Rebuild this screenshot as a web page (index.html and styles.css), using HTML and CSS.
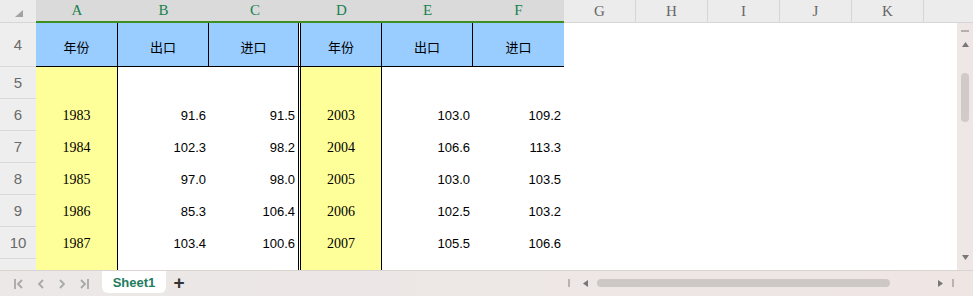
FILE: index.html
```html
<!DOCTYPE html>
<html lang="zh-CN">
<head>
  <meta charset="UTF-8">
  <title>Sheet1</title>
  <link rel="stylesheet" href="styles.css">
</head>
<body>
  <div class="app">
    <div class="colhead">
      <div class="corner">
        <svg width="8" height="7" viewBox="0 0 8 7"><polygon points="8,0 8,7 0,7" fill="#a3a3a3"/></svg>
      </div>
      <div class="ch sel a">A</div>
      <div class="ch sel b">B</div>
      <div class="ch sel c">C</div>
      <div class="ch sel d">D</div>
      <div class="ch sel e">E</div>
      <div class="ch sel f">F</div>
      <div class="ch g">G</div>
      <div class="ch g">H</div>
      <div class="ch g">I</div>
      <div class="ch g">J</div>
      <div class="ch g">K</div>
      <div class="ch rest"></div>
    </div>

    <div class="body">
      <div class="rows">
        <div class="row head">
          <div class="rh">4</div>
          <div class="cell a">年份</div>
          <div class="cell b">出口</div>
          <div class="cell c">进口</div>
          <div class="cell d">年份</div>
          <div class="cell e">出口</div>
          <div class="cell f">进口</div>
        </div>
        <div class="row">
          <div class="rh">5</div>
          <div class="cell a"></div>
          <div class="cell b"></div>
          <div class="cell c"></div>
          <div class="cell d"></div>
          <div class="cell e"></div>
          <div class="cell f"></div>
        </div>
        <div class="row">
          <div class="rh">6</div>
          <div class="cell a">1983</div>
          <div class="cell b">91.6</div>
          <div class="cell c">91.5</div>
          <div class="cell d">2003</div>
          <div class="cell e">103.0</div>
          <div class="cell f">109.2</div>
        </div>
        <div class="row">
          <div class="rh">7</div>
          <div class="cell a">1984</div>
          <div class="cell b">102.3</div>
          <div class="cell c">98.2</div>
          <div class="cell d">2004</div>
          <div class="cell e">106.6</div>
          <div class="cell f">113.3</div>
        </div>
        <div class="row">
          <div class="rh">8</div>
          <div class="cell a">1985</div>
          <div class="cell b">97.0</div>
          <div class="cell c">98.0</div>
          <div class="cell d">2005</div>
          <div class="cell e">103.0</div>
          <div class="cell f">103.5</div>
        </div>
        <div class="row">
          <div class="rh">9</div>
          <div class="cell a">1986</div>
          <div class="cell b">85.3</div>
          <div class="cell c">106.4</div>
          <div class="cell d">2006</div>
          <div class="cell e">102.5</div>
          <div class="cell f">103.2</div>
        </div>
        <div class="row">
          <div class="rh">10</div>
          <div class="cell a">1987</div>
          <div class="cell b">103.4</div>
          <div class="cell c">100.6</div>
          <div class="cell d">2007</div>
          <div class="cell e">105.5</div>
          <div class="cell f">106.6</div>
        </div>
        <div class="row">
          <div class="rh">11</div>
          <div class="cell a">1988</div>
          <div class="cell b">105.1</div>
          <div class="cell c">111.3</div>
          <div class="cell d">2008</div>
          <div class="cell e">108.6</div>
          <div class="cell f">115.3</div>
        </div>
      </div>

      <div class="vscroll">
        <div class="dash"></div>
        <svg class="arrow" width="7" height="5" viewBox="0 0 7 5"><polygon points="3.5,0 7,5 0,5" fill="#777"/></svg>
        <div class="vthumb"></div>
        <div class="spacer"></div>
        <svg class="arrow down" width="7" height="5" viewBox="0 0 7 5"><polygon points="0,0 7,0 3.5,5" fill="#777"/></svg>
      </div>
    </div>

    <div class="bottom">
      <div class="nav">
        <svg width="9" height="10" viewBox="0 0 9 10"><path d="M1 0v10M8 1L4 5l4 4" stroke="#a8a8a8" stroke-width="1.8" fill="none"/></svg>
        <svg width="6" height="10" viewBox="0 0 6 10"><path d="M5 1L1 5l4 4" stroke="#a8a8a8" stroke-width="1.8" fill="none"/></svg>
        <svg width="6" height="10" viewBox="0 0 6 10"><path d="M1 1l4 4-4 4" stroke="#a8a8a8" stroke-width="1.8" fill="none"/></svg>
        <svg width="9" height="10" viewBox="0 0 9 10"><path d="M1 1l4 4-4 4M8 0v10" stroke="#a8a8a8" stroke-width="1.8" fill="none"/></svg>
      </div>
      <div class="tab">Sheet1</div>
      <div class="add">+</div>
      <div class="hscroll">
        <div class="bar"></div>
        <svg width="5" height="7" viewBox="0 0 5 7"><polygon points="0,3.5 5,0 5,7" fill="#777"/></svg>
        <div class="hthumb"></div>
        <svg width="5" height="7" viewBox="0 0 5 7"><polygon points="5,3.5 0,0 0,7" fill="#777"/></svg>
        <div class="bar"></div>
      </div>
    </div>
  </div>
</body>
</html>
```

FILE: styles.css
```css
body {
  margin: 0;
  background: #ffffff;
  font-family: "Liberation Sans", Arial, sans-serif;
}

.app {
  width: 973px;
  height: 296px;
  overflow: hidden;
  display: flex;
  flex-direction: column;
}

/* column header */
.colhead {
  display: flex;
  height: 23px;
  flex-shrink: 0;
}

.corner {
  width: 36px;
  background: #ececec;
  border-bottom: 1px solid #d6d6d6;
  box-sizing: border-box;
  padding: 10px 0 0 15px;
}

.corner svg {
  display: block;
}

.ch {
  box-sizing: border-box;
  display: flex;
  align-items: center;
  justify-content: center;
  font-family: "Liberation Serif", "Times New Roman", serif;
  font-size: 15px;
  color: #666;
  background: #ececec;
  border-bottom: 1px solid #d6d6d6;
}

.ch.sel {
  background: #dadada;
  color: #17824e;
  border-bottom: 2px solid #3f8e24;
}

.ch.g {
  width: 72px;
  border-right: 1px solid #d6d6d6;
}

.ch.rest {
  flex: 1;
}

/* column widths */
.a { width: 82px; }
.b { width: 91px; }
.c { width: 92px; }
.d { width: 81px; }
.e { width: 91px; }
.f { width: 91px; }

/* body */
.body {
  display: flex;
  height: 247px;
  flex-shrink: 0;
}

.rows {
  width: 957px;
  overflow: hidden;
}

.row {
  display: flex;
  height: 32px;
}

.row.head {
  height: 44px;
}

.rh {
  width: 36px;
  flex-shrink: 0;
  box-sizing: border-box;
  background: #eeeeee;
  border-bottom: 1px solid #d9d9d9;
  display: flex;
  align-items: center;
  justify-content: center;
  font-size: 15px;
  color: #6a6a6a;
}

.cell {
  flex-shrink: 0;
  box-sizing: border-box;
  display: flex;
  align-items: center;
  justify-content: flex-end;
  padding-right: 3px;
  font-size: 13px;
  color: #000;
}

.cell.a,
.cell.d {
  background: #ffff99;
  border-right: 1px solid #000;
  justify-content: center;
  padding: 2px 0 0 0;
  font-family: "Liberation Serif", "Times New Roman", serif;
  font-size: 14px;
}

.cell.c {
  border-right: 3px double #000;
  background-clip: padding-box;
}

.row.head .cell {
  background: #99ccff;
  background-clip: padding-box;
  border-bottom: 1px solid #000;
  justify-content: center;
  padding: 3px 0 0 0;
  font-family: "Noto Sans CJK SC", sans-serif;
  font-size: 13px;
}

.row.head .cell.b,
.row.head .cell.e {
  border-right: 1px solid #000;
}

/* vertical scrollbar */
.vscroll {
  width: 16px;
  background: #efe7e5;
  display: flex;
  flex-direction: column;
  align-items: center;
}

.dash {
  width: 8px;
  height: 2px;
  background: #b5b0ae;
  margin-top: 7px;
}

.arrow {
  margin-top: 10px;
}

.arrow.down {
  margin: 0 0 10px 0;
}

.vthumb {
  width: 8px;
  height: 49px;
  border-radius: 4px;
  background: #d0cac8;
  margin-top: 26px;
}

.spacer {
  flex: 1;
}

/* bottom bar */
.bottom {
  height: 26px;
  flex-shrink: 0;
  box-sizing: border-box;
  border-top: 1px solid #d9d3d1;
  background: linear-gradient(to right, #ebe8e7, #efe6e4);
  display: flex;
  align-items: flex-start;
}

.nav {
  width: 102px;
  display: flex;
  align-items: center;
  gap: 15px;
  padding: 8px 0 0 14px;
  box-sizing: border-box;
}

.nav svg {
  display: block;
}

.tab {
  width: 64px;
  height: 22px;
  background: #ffffff;
  border-radius: 0 0 6px 6px;
  display: flex;
  align-items: center;
  justify-content: center;
  font-size: 13px;
  font-weight: bold;
  color: #1e7b5e;
}

.add {
  width: 24px;
  text-align: center;
  font-size: 19px;
  font-weight: bold;
  color: #333;
  line-height: 24px;
  margin-left: 1px;
}

.hscroll {
  margin-left: 371px;
  flex: 1;
  display: flex;
  align-items: center;
  height: 24px;
  padding-left: 6px;
}

.hscroll .bar {
  width: 2px;
  height: 8px;
  background: #b8b2b0;
}

.hscroll svg {
  display: block;
  margin: 0 9px 0 13px;
}

.hthumb {
  width: 293px;
  height: 8px;
  border-radius: 4px;
  background: #cdc8c6;
  margin-right: 35px;
}
```
